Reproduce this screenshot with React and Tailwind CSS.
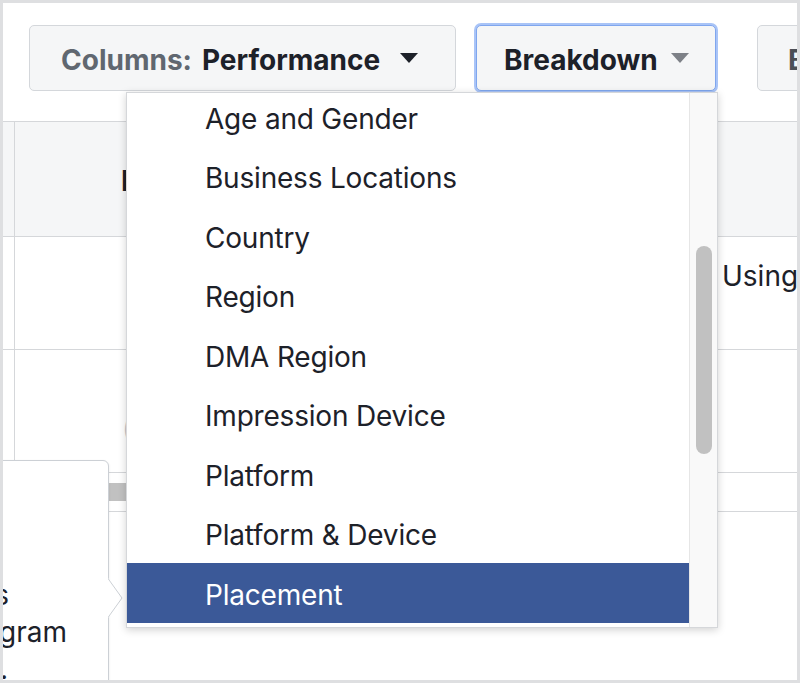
import React from "react";

const items = [
  "Age and Gender",
  "Business Locations",
  "Country",
  "Region",
  "DMA Region",
  "Impression Device",
  "Platform",
  "Platform & Device",
  "Placement",
  "Time of Day",
];

function Caret({ color }) {
  return (
    <svg width="18" height="10" viewBox="0 0 18 10" className="shrink-0">
      <path d="M0 0 L18 0 L9 10 Z" fill={color} />
    </svg>
  );
}

export default function App() {
  return (
    <div
      className="w-[800px] h-[683px] relative overflow-hidden bg-white border-[3px] border-[#dedfe1] text-[#1d2129]"
      style={{ fontFamily: "Inter, 'Noto Sans', sans-serif" }}
    >
      {/* toolbar */}
      <div className="h-[118px] flex items-start pt-[22px] pl-[26px]">
        <div className="shrink-0 w-[427px] h-[66px] flex items-center pt-[3px] pl-[31px] rounded-[5px] border border-[#d4d7db] bg-[#f5f6f7] text-[28px] font-bold">
          <span className="text-[#606770]">Columns:</span>
          <span className="ml-[10px] text-[#1d2129]">Performance</span>
          <span className="ml-[20px] mb-[3px]">
            <Caret color="#1d2129" />
          </span>
        </div>
        <div className="shrink-0 ml-[20px] w-[240px] h-[66px] flex items-center pt-[3px] pl-[27px] rounded-[5px] border border-[#7fa6ee] shadow-[0_0_0_2px_#a9c4f7] bg-[#f5f6f7] text-[28px] font-bold">
          <span>Breakdown</span>
          <span className="ml-[13px] mb-[3px]">
            <Caret color="#7d8187" />
          </span>
        </div>
        <div className="shrink-0 ml-[41px] w-[140px] h-[66px] flex items-center pt-[3px] pl-[30px] rounded-[5px] border border-[#d4d7db] bg-[#f5f6f7] text-[28px] font-bold">
          <span className="text-[#4b4f56]">Breakdown</span>
        </div>
      </div>

      {/* table */}
      <div className="border-t border-[#d5d7da]">
        <div className="h-[115px] flex bg-[#f5f6f7] border-b border-[#d5d7da]">
          <div className="w-[12px] shrink-0 border-r border-[#d5d7da]" />
          <div className="flex items-center pt-[3px] pl-[106px] text-[28px] font-bold whitespace-nowrap">
            Impressions
          </div>
        </div>
        <div className="h-[113px] flex border-b border-[#d5d7da]">
          <div className="w-[12px] shrink-0 border-r border-[#d5d7da]" />
          <div className="w-[695px] shrink-0" />
          <div className="pl-[12px] pt-[21px] text-[28px] leading-[37px] whitespace-nowrap">
            Using Facebook
          </div>
        </div>
        <div className="h-[123px] flex border-b border-[#d5d7da]">
          <div className="w-[12px] shrink-0 border-r border-[#d5d7da]" />
          <div className="pl-[107px] pt-[60px] text-[28px] leading-[37px] text-[#c4c7cc]">
            (
          </div>
        </div>
        <div className="h-[39px] border-b border-[#d5d7da] pt-[10px] pl-[15px]">
          <div className="h-[18px] w-[420px] bg-[#c1c1c1]" />
        </div>
      </div>

      {/* tooltip */}
      <div className="absolute left-[-200px] top-[457px] w-[306px] h-[300px] bg-white border border-[#ccd0d5] rounded-tr-[6px] shadow-[0_1px_3px_rgba(0,0,0,0.08)] z-10">
        <div className="pt-[116px] text-[28px] leading-[37px] whitespace-nowrap">
          <div className="text-right pr-[99px]">placements</div>
          <div className="text-right pr-[41px]">and Instagram</div>
          <div className="text-right pr-[100px]">Network.</div>
        </div>
        <svg
          width="16"
          height="40"
          viewBox="0 0 16 40"
          className="absolute right-[-16px] top-[117px]"
        >
          <path d="M0 0 L14 20 L0 40 Z" fill="#ffffff" />
          <path d="M0 0.5 L14 20 L0 39.5" fill="none" stroke="#ccd0d5" strokeWidth="1" />
        </svg>
      </div>

      {/* dropdown */}
      <div className="absolute left-[123px] top-[89px] w-[592px] h-[536px] flex bg-white border border-[#d5d7da] shadow-[0_2px_8px_rgba(0,0,0,0.18)] z-20">
        <div className="flex-1 overflow-hidden">
          <div className="mt-[-6px]">
            {items.map((t) => (
              <div
                key={t}
                className={
                  t === "Placement"
                    ? "h-[59.5px] flex items-center pt-[4px] pl-[78px] text-[28px] tracking-[-0.2px] bg-[#3b5998] text-white whitespace-nowrap"
                    : "h-[59.5px] flex items-center pt-[4px] pl-[78px] text-[28px] tracking-[-0.2px] text-[#1d2129] whitespace-nowrap"
                }
              >
                {t}
              </div>
            ))}
          </div>
        </div>
        <div className="w-[28px] shrink-0 border-l border-[#e6e6e6] bg-[#f9f9f9]">
          <div className="mt-[153px] ml-[6px] w-[16px] h-[208px] rounded-full bg-[#c1c1c1]" />
        </div>
      </div>
    </div>
  );
}
